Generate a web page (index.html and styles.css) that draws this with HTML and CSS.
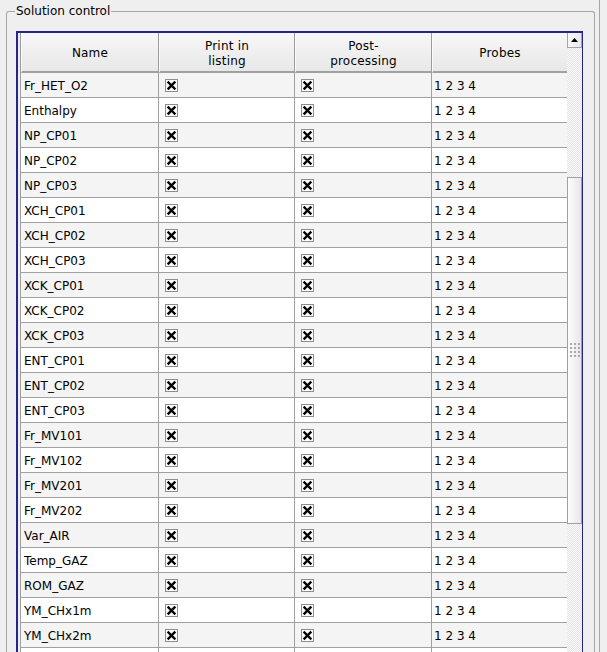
FILE: index.html
```html
<!DOCTYPE html>
<html>
<head>
<meta charset="utf-8">
<link rel="stylesheet" href="styles.css">
</head>
<body>
<div class="wrap">
  <div class="group">
    <span class="group-title">Solution control</span>
    <div class="frame">
      <div class="table">
        <div class="row head">
          <div class="stub"></div>
          <div class="hc">Name</div>
          <div class="hc">Print in<br>listing</div>
          <div class="hc">Post-<br>processing</div>
          <div class="hc last">Probes</div>
        </div>
        <div class="row alt"><div class="stub"></div><div class="c">Fr_HET_O2</div><div class="c"><span class="cb"><svg viewBox="0 0 11 11"><path d="M2.5 2.5L8.5 8.5M8.5 2.5L2.5 8.5"/></svg></span></div><div class="c"><span class="cb"><svg viewBox="0 0 11 11"><path d="M2.5 2.5L8.5 8.5M8.5 2.5L2.5 8.5"/></svg></span></div><div class="c last">1 2 3 4</div></div>
        <div class="row"><div class="stub"></div><div class="c">Enthalpy</div><div class="c"><span class="cb"><svg viewBox="0 0 11 11"><path d="M2.5 2.5L8.5 8.5M8.5 2.5L2.5 8.5"/></svg></span></div><div class="c"><span class="cb"><svg viewBox="0 0 11 11"><path d="M2.5 2.5L8.5 8.5M8.5 2.5L2.5 8.5"/></svg></span></div><div class="c last">1 2 3 4</div></div>
        <div class="row alt"><div class="stub"></div><div class="c">NP_CP01</div><div class="c"><span class="cb"><svg viewBox="0 0 11 11"><path d="M2.5 2.5L8.5 8.5M8.5 2.5L2.5 8.5"/></svg></span></div><div class="c"><span class="cb"><svg viewBox="0 0 11 11"><path d="M2.5 2.5L8.5 8.5M8.5 2.5L2.5 8.5"/></svg></span></div><div class="c last">1 2 3 4</div></div>
        <div class="row"><div class="stub"></div><div class="c">NP_CP02</div><div class="c"><span class="cb"><svg viewBox="0 0 11 11"><path d="M2.5 2.5L8.5 8.5M8.5 2.5L2.5 8.5"/></svg></span></div><div class="c"><span class="cb"><svg viewBox="0 0 11 11"><path d="M2.5 2.5L8.5 8.5M8.5 2.5L2.5 8.5"/></svg></span></div><div class="c last">1 2 3 4</div></div>
        <div class="row alt"><div class="stub"></div><div class="c">NP_CP03</div><div class="c"><span class="cb"><svg viewBox="0 0 11 11"><path d="M2.5 2.5L8.5 8.5M8.5 2.5L2.5 8.5"/></svg></span></div><div class="c"><span class="cb"><svg viewBox="0 0 11 11"><path d="M2.5 2.5L8.5 8.5M8.5 2.5L2.5 8.5"/></svg></span></div><div class="c last">1 2 3 4</div></div>
        <div class="row"><div class="stub"></div><div class="c">XCH_CP01</div><div class="c"><span class="cb"><svg viewBox="0 0 11 11"><path d="M2.5 2.5L8.5 8.5M8.5 2.5L2.5 8.5"/></svg></span></div><div class="c"><span class="cb"><svg viewBox="0 0 11 11"><path d="M2.5 2.5L8.5 8.5M8.5 2.5L2.5 8.5"/></svg></span></div><div class="c last">1 2 3 4</div></div>
        <div class="row alt"><div class="stub"></div><div class="c">XCH_CP02</div><div class="c"><span class="cb"><svg viewBox="0 0 11 11"><path d="M2.5 2.5L8.5 8.5M8.5 2.5L2.5 8.5"/></svg></span></div><div class="c"><span class="cb"><svg viewBox="0 0 11 11"><path d="M2.5 2.5L8.5 8.5M8.5 2.5L2.5 8.5"/></svg></span></div><div class="c last">1 2 3 4</div></div>
        <div class="row"><div class="stub"></div><div class="c">XCH_CP03</div><div class="c"><span class="cb"><svg viewBox="0 0 11 11"><path d="M2.5 2.5L8.5 8.5M8.5 2.5L2.5 8.5"/></svg></span></div><div class="c"><span class="cb"><svg viewBox="0 0 11 11"><path d="M2.5 2.5L8.5 8.5M8.5 2.5L2.5 8.5"/></svg></span></div><div class="c last">1 2 3 4</div></div>
        <div class="row alt"><div class="stub"></div><div class="c">XCK_CP01</div><div class="c"><span class="cb"><svg viewBox="0 0 11 11"><path d="M2.5 2.5L8.5 8.5M8.5 2.5L2.5 8.5"/></svg></span></div><div class="c"><span class="cb"><svg viewBox="0 0 11 11"><path d="M2.5 2.5L8.5 8.5M8.5 2.5L2.5 8.5"/></svg></span></div><div class="c last">1 2 3 4</div></div>
        <div class="row"><div class="stub"></div><div class="c">XCK_CP02</div><div class="c"><span class="cb"><svg viewBox="0 0 11 11"><path d="M2.5 2.5L8.5 8.5M8.5 2.5L2.5 8.5"/></svg></span></div><div class="c"><span class="cb"><svg viewBox="0 0 11 11"><path d="M2.5 2.5L8.5 8.5M8.5 2.5L2.5 8.5"/></svg></span></div><div class="c last">1 2 3 4</div></div>
        <div class="row alt"><div class="stub"></div><div class="c">XCK_CP03</div><div class="c"><span class="cb"><svg viewBox="0 0 11 11"><path d="M2.5 2.5L8.5 8.5M8.5 2.5L2.5 8.5"/></svg></span></div><div class="c"><span class="cb"><svg viewBox="0 0 11 11"><path d="M2.5 2.5L8.5 8.5M8.5 2.5L2.5 8.5"/></svg></span></div><div class="c last">1 2 3 4</div></div>
        <div class="row"><div class="stub"></div><div class="c">ENT_CP01</div><div class="c"><span class="cb"><svg viewBox="0 0 11 11"><path d="M2.5 2.5L8.5 8.5M8.5 2.5L2.5 8.5"/></svg></span></div><div class="c"><span class="cb"><svg viewBox="0 0 11 11"><path d="M2.5 2.5L8.5 8.5M8.5 2.5L2.5 8.5"/></svg></span></div><div class="c last">1 2 3 4</div></div>
        <div class="row alt"><div class="stub"></div><div class="c">ENT_CP02</div><div class="c"><span class="cb"><svg viewBox="0 0 11 11"><path d="M2.5 2.5L8.5 8.5M8.5 2.5L2.5 8.5"/></svg></span></div><div class="c"><span class="cb"><svg viewBox="0 0 11 11"><path d="M2.5 2.5L8.5 8.5M8.5 2.5L2.5 8.5"/></svg></span></div><div class="c last">1 2 3 4</div></div>
        <div class="row"><div class="stub"></div><div class="c">ENT_CP03</div><div class="c"><span class="cb"><svg viewBox="0 0 11 11"><path d="M2.5 2.5L8.5 8.5M8.5 2.5L2.5 8.5"/></svg></span></div><div class="c"><span class="cb"><svg viewBox="0 0 11 11"><path d="M2.5 2.5L8.5 8.5M8.5 2.5L2.5 8.5"/></svg></span></div><div class="c last">1 2 3 4</div></div>
        <div class="row alt"><div class="stub"></div><div class="c">Fr_MV101</div><div class="c"><span class="cb"><svg viewBox="0 0 11 11"><path d="M2.5 2.5L8.5 8.5M8.5 2.5L2.5 8.5"/></svg></span></div><div class="c"><span class="cb"><svg viewBox="0 0 11 11"><path d="M2.5 2.5L8.5 8.5M8.5 2.5L2.5 8.5"/></svg></span></div><div class="c last">1 2 3 4</div></div>
        <div class="row"><div class="stub"></div><div class="c">Fr_MV102</div><div class="c"><span class="cb"><svg viewBox="0 0 11 11"><path d="M2.5 2.5L8.5 8.5M8.5 2.5L2.5 8.5"/></svg></span></div><div class="c"><span class="cb"><svg viewBox="0 0 11 11"><path d="M2.5 2.5L8.5 8.5M8.5 2.5L2.5 8.5"/></svg></span></div><div class="c last">1 2 3 4</div></div>
        <div class="row alt"><div class="stub"></div><div class="c">Fr_MV201</div><div class="c"><span class="cb"><svg viewBox="0 0 11 11"><path d="M2.5 2.5L8.5 8.5M8.5 2.5L2.5 8.5"/></svg></span></div><div class="c"><span class="cb"><svg viewBox="0 0 11 11"><path d="M2.5 2.5L8.5 8.5M8.5 2.5L2.5 8.5"/></svg></span></div><div class="c last">1 2 3 4</div></div>
        <div class="row"><div class="stub"></div><div class="c">Fr_MV202</div><div class="c"><span class="cb"><svg viewBox="0 0 11 11"><path d="M2.5 2.5L8.5 8.5M8.5 2.5L2.5 8.5"/></svg></span></div><div class="c"><span class="cb"><svg viewBox="0 0 11 11"><path d="M2.5 2.5L8.5 8.5M8.5 2.5L2.5 8.5"/></svg></span></div><div class="c last">1 2 3 4</div></div>
        <div class="row alt"><div class="stub"></div><div class="c">Var_AIR</div><div class="c"><span class="cb"><svg viewBox="0 0 11 11"><path d="M2.5 2.5L8.5 8.5M8.5 2.5L2.5 8.5"/></svg></span></div><div class="c"><span class="cb"><svg viewBox="0 0 11 11"><path d="M2.5 2.5L8.5 8.5M8.5 2.5L2.5 8.5"/></svg></span></div><div class="c last">1 2 3 4</div></div>
        <div class="row"><div class="stub"></div><div class="c">Temp_GAZ</div><div class="c"><span class="cb"><svg viewBox="0 0 11 11"><path d="M2.5 2.5L8.5 8.5M8.5 2.5L2.5 8.5"/></svg></span></div><div class="c"><span class="cb"><svg viewBox="0 0 11 11"><path d="M2.5 2.5L8.5 8.5M8.5 2.5L2.5 8.5"/></svg></span></div><div class="c last">1 2 3 4</div></div>
        <div class="row alt"><div class="stub"></div><div class="c">ROM_GAZ</div><div class="c"><span class="cb"><svg viewBox="0 0 11 11"><path d="M2.5 2.5L8.5 8.5M8.5 2.5L2.5 8.5"/></svg></span></div><div class="c"><span class="cb"><svg viewBox="0 0 11 11"><path d="M2.5 2.5L8.5 8.5M8.5 2.5L2.5 8.5"/></svg></span></div><div class="c last">1 2 3 4</div></div>
        <div class="row"><div class="stub"></div><div class="c">YM_CHx1m</div><div class="c"><span class="cb"><svg viewBox="0 0 11 11"><path d="M2.5 2.5L8.5 8.5M8.5 2.5L2.5 8.5"/></svg></span></div><div class="c"><span class="cb"><svg viewBox="0 0 11 11"><path d="M2.5 2.5L8.5 8.5M8.5 2.5L2.5 8.5"/></svg></span></div><div class="c last">1 2 3 4</div></div>
        <div class="row alt"><div class="stub"></div><div class="c">YM_CHx2m</div><div class="c"><span class="cb"><svg viewBox="0 0 11 11"><path d="M2.5 2.5L8.5 8.5M8.5 2.5L2.5 8.5"/></svg></span></div><div class="c"><span class="cb"><svg viewBox="0 0 11 11"><path d="M2.5 2.5L8.5 8.5M8.5 2.5L2.5 8.5"/></svg></span></div><div class="c last">1 2 3 4</div></div>
        <div class="row"><div class="stub"></div><div class="c"></div><div class="c"></div><div class="c"></div><div class="c last"></div></div>
      </div>
      <div class="vscroll">
        <div class="sbtn"><svg width="7" height="4" viewBox="0 0 7 4"><path d="M0 4L3.5 0L7 4Z"/></svg></div>
        <div class="handle">
          <svg class="grip" width="11" height="15" viewBox="0 0 11 15">
            <g fill="#a9a9a9">
              <rect x="0" y="0" width="2" height="2"/><rect x="4" y="0" width="2" height="2"/><rect x="8" y="0" width="2" height="2"/>
              <rect x="0" y="4" width="2" height="2"/><rect x="4" y="4" width="2" height="2"/><rect x="8" y="4" width="2" height="2"/>
              <rect x="0" y="8" width="2" height="2"/><rect x="4" y="8" width="2" height="2"/><rect x="8" y="8" width="2" height="2"/>
              <rect x="0" y="12" width="2" height="2"/><rect x="4" y="12" width="2" height="2"/><rect x="8" y="12" width="2" height="2"/>
            </g>
          </svg>
        </div>
      </div>
    </div>
  </div>
</div>
</body>
</html>
```
FILE: styles.css
```css
html, body {
  margin: 0;
  padding: 0;
  height: 652px;
  overflow: hidden;
  background: #efefef;
}
body {
  font-family: "DejaVu Sans", sans-serif;
  font-size: 12px;
  color: #000;
}
.wrap {
  width: 600px;
  height: 652px;
  border-right: 1px solid #a8a8a8;
  padding-top: 11px;
  box-sizing: border-box;
  overflow: hidden;
}
.group {
  position: relative;
  margin: 0 4px 0 6px;
  border: 1px solid #a6a6a6;
  border-bottom: none;
  border-radius: 3px 3px 0 0;
  padding: 19px 11px 0 9px;
  height: 700px;
}
.group-title {
  position: absolute;
  top: -8px;
  left: 8px;
  padding: 0 1px;
  line-height: 14px;
  background: #efefef;
}
.frame {
  display: flex;
  border: 2px solid #25258c;
  border-bottom: none;
  background: #efefef;
  height: 700px;
}
.table {
  width: 549px;
}
.row {
  display: grid;
  grid-template-columns: 3px 138px 136px 137px 135px;
  height: 25px;
  background: #fff;
}
.row.alt {
  background: #f4f4f4;
}
.stub {
  background: #efefef;
  border-right: 1px solid #a0a0a0;
}
.c {
  border-right: 1px solid #a0a0a0;
  border-bottom: 1px solid #a0a0a0;
  padding-left: 3px;
  padding-top: 2px;
  box-sizing: border-box;
  line-height: 22px;
  display: flex;
  align-items: center;
  white-space: nowrap;
}
.c.last {
  border-right: none;
  padding-left: 2px;
}
.row.head {
  height: 40px;
  background: linear-gradient(#f7f7f7, #e7e7e7);
}
.row.head .stub {
  background: #ececec;
  border-right: 1px solid #9c9c9c;
}
.hc {
  border-right: 1px solid #9c9c9c;
  border-left: 1px solid #fafafa;
  border-bottom: 2px solid #a0a0a0;
  display: flex;
  align-items: center;
  justify-content: center;
  text-align: center;
  line-height: 15px;
  padding-top: 3px;
  box-sizing: border-box;
  letter-spacing: 0.2px;
}
.hc.last {
  border-right: none;
}
.cb {
  display: inline-block;
  width: 11px;
  height: 11px;
  border: 1px solid #8e8e8e;
  background: #fdfdfd;
  margin-left: 3px;
  margin-top: -1px;
}
.cb svg {
  display: block;
  width: 11px;
  height: 11px;
}
.cb path {
  stroke: #000;
  stroke-width: 2.4;
  stroke-linecap: square;
  fill: none;
}
.vscroll {
  width: 15px;
  background: repeating-conic-gradient(#e4e4e4 0 25%, #fbfbfb 0 50%) 0 0 / 2px 2px;
}
.sbtn {
  height: 14px;
  border: 1px solid #a4a4a4;
  border-top: none;
  background: linear-gradient(90deg, #fbfbfb, #e8e8e8);
  display: flex;
  align-items: center;
  justify-content: center;
  width: 13px;
}
.sbtn svg path {
  fill: #000;
}
.handle {
  margin-top: 129px;
  height: 345px;
  width: 13px;
  border: 1px solid #a0a0a0;
  background: linear-gradient(90deg, #fdfdfd, #e6e6e6);
  display: flex;
  align-items: center;
  justify-content: center;
}
.grip {
  display: block;
  margin-left: 1px;
}
```
